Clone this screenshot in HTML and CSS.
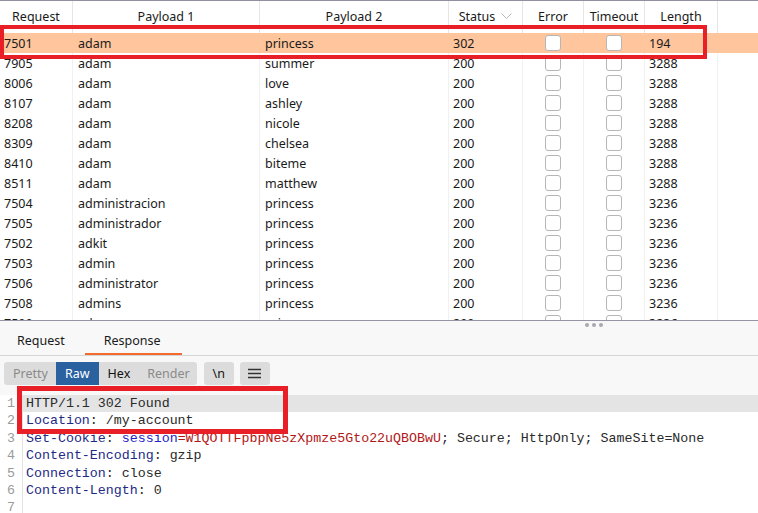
FILE: index.html
```html
<!DOCTYPE html>
<html>
<head>
<meta charset="utf-8">
<link rel="stylesheet" href="styles.css">
</head>
<body>
<div class="app">
  <div class="results">
    <div class="row head">
      <div class="c">Request</div>
      <div class="c">Payload 1</div>
      <div class="c">Payload 2</div>
      <div class="c">Status <svg class="chev" width="11" height="7" viewBox="0 0 11 7"><path d="M0.5 0.5 L5.5 5.5 L10.5 0.5" fill="none" stroke="#b8b8c0" stroke-width="1"/></svg></div>
      <div class="c">Error</div>
      <div class="c">Timeout</div>
      <div class="c">Length</div>
      <div class="c"></div>
    </div>
    <div class="row sel"><div class="c">7501</div><div class="c">adam</div><div class="c">princess</div><div class="c">302</div><div class="c cb"><span class="box"></span></div><div class="c cb"><span class="box"></span></div><div class="c">194</div><div class="c"></div></div>
    <div class="row"><div class="c">7905</div><div class="c">adam</div><div class="c">summer</div><div class="c">200</div><div class="c cb"><span class="box"></span></div><div class="c cb"><span class="box"></span></div><div class="c">3288</div><div class="c"></div></div>
    <div class="row"><div class="c">8006</div><div class="c">adam</div><div class="c">love</div><div class="c">200</div><div class="c cb"><span class="box"></span></div><div class="c cb"><span class="box"></span></div><div class="c">3288</div><div class="c"></div></div>
    <div class="row"><div class="c">8107</div><div class="c">adam</div><div class="c">ashley</div><div class="c">200</div><div class="c cb"><span class="box"></span></div><div class="c cb"><span class="box"></span></div><div class="c">3288</div><div class="c"></div></div>
    <div class="row"><div class="c">8208</div><div class="c">adam</div><div class="c">nicole</div><div class="c">200</div><div class="c cb"><span class="box"></span></div><div class="c cb"><span class="box"></span></div><div class="c">3288</div><div class="c"></div></div>
    <div class="row"><div class="c">8309</div><div class="c">adam</div><div class="c">chelsea</div><div class="c">200</div><div class="c cb"><span class="box"></span></div><div class="c cb"><span class="box"></span></div><div class="c">3288</div><div class="c"></div></div>
    <div class="row"><div class="c">8410</div><div class="c">adam</div><div class="c">biteme</div><div class="c">200</div><div class="c cb"><span class="box"></span></div><div class="c cb"><span class="box"></span></div><div class="c">3288</div><div class="c"></div></div>
    <div class="row"><div class="c">8511</div><div class="c">adam</div><div class="c">matthew</div><div class="c">200</div><div class="c cb"><span class="box"></span></div><div class="c cb"><span class="box"></span></div><div class="c">3288</div><div class="c"></div></div>
    <div class="row"><div class="c">7504</div><div class="c">administracion</div><div class="c">princess</div><div class="c">200</div><div class="c cb"><span class="box"></span></div><div class="c cb"><span class="box"></span></div><div class="c">3236</div><div class="c"></div></div>
    <div class="row"><div class="c">7505</div><div class="c">administrador</div><div class="c">princess</div><div class="c">200</div><div class="c cb"><span class="box"></span></div><div class="c cb"><span class="box"></span></div><div class="c">3236</div><div class="c"></div></div>
    <div class="row"><div class="c">7502</div><div class="c">adkit</div><div class="c">princess</div><div class="c">200</div><div class="c cb"><span class="box"></span></div><div class="c cb"><span class="box"></span></div><div class="c">3236</div><div class="c"></div></div>
    <div class="row"><div class="c">7503</div><div class="c">admin</div><div class="c">princess</div><div class="c">200</div><div class="c cb"><span class="box"></span></div><div class="c cb"><span class="box"></span></div><div class="c">3236</div><div class="c"></div></div>
    <div class="row"><div class="c">7506</div><div class="c">administrator</div><div class="c">princess</div><div class="c">200</div><div class="c cb"><span class="box"></span></div><div class="c cb"><span class="box"></span></div><div class="c">3236</div><div class="c"></div></div>
    <div class="row"><div class="c">7508</div><div class="c">admins</div><div class="c">princess</div><div class="c">200</div><div class="c cb"><span class="box"></span></div><div class="c cb"><span class="box"></span></div><div class="c">3236</div><div class="c"></div></div>
    <div class="row"><div class="c">7509</div><div class="c">adm</div><div class="c">princess</div><div class="c">200</div><div class="c cb"><span class="box"></span></div><div class="c cb"><span class="box"></span></div><div class="c">3236</div><div class="c"></div></div>
    <div class="mark mark1"></div>
  </div>
  <div class="tabs">
    <span class="grip"><i></i><i></i><i></i></span>
    <div class="tab">Request</div>
    <div class="tab active">Response</div>
  </div>
  <div class="toolbar">
    <div class="group">
      <span class="opt dim">Pretty</span>
      <span class="opt on">Raw</span>
      <span class="opt">Hex</span>
      <span class="opt dim">Render</span>
    </div>
    <div class="btn">\n</div>
    <div class="btn"><svg width="13" height="11" viewBox="0 0 13 11"><path d="M0 1.5H13M0 5.5H13M0 9.5H13" stroke="#333" stroke-width="1.3"/></svg></div>
  </div>
  <div class="editor">
    <div class="ln cur"><span class="no">1</span><span class="code">HTTP/1.1 302 Found</span></div>
    <div class="ln"><span class="no">2</span><span class="code"><span class="k">Location</span>: /my-account</span></div>
    <div class="ln"><span class="no">3</span><span class="code"><span class="k">Set-Cookie</span>: <span class="n">session</span><span class="v">=W1QOTTFpbpNe5zXpmze5Gto22uQBOBwU</span>; Secure; HttpOnly; SameSite=None</span></div>
    <div class="ln"><span class="no">4</span><span class="code"><span class="k">Content-Encoding</span>: gzip</span></div>
    <div class="ln"><span class="no">5</span><span class="code"><span class="k">Connection</span>: close</span></div>
    <div class="ln"><span class="no">6</span><span class="code"><span class="k">Content-Length</span>: 0</span></div>
    <div class="ln"><span class="no">7</span><span class="code"></span></div>
    <div class="mark mark2"></div>
  </div>
</div>
</body>
</html>
```
FILE: styles.css
```css
* { box-sizing: border-box; }
html, body { margin: 0; padding: 0; }
body {
  width: 758px;
  height: 513px;
  overflow: hidden;
  background: #ffffff;
  font-family: "Noto Sans", "Open Sans", sans-serif;
  font-size: 12.5px;
  color: #1a1a1a;
}
.app { display: flex; flex-direction: column; height: 513px; }

.results {
  position: relative;
  height: 321px;
  flex: none;
  overflow: hidden;
  border-top: 1px solid #8f8f9f;
  border-bottom: 1px solid #9595a5;
}
.row {
  display: grid;
  grid-template-columns: 73px 187px 189px 74px 61px 61px 73px 1fr;
  height: 20px;
  align-items: stretch;
}
.row .c {
  border-right: 1px solid #f1f1f1;
  padding-left: 4px;
  padding-top: 1px;
  display: flex;
  align-items: center;
  white-space: nowrap;
  overflow: hidden;
}
.row .c:nth-child(2), .row .c:nth-child(3) { padding-left: 5px; }
.row .c:last-child { border-right: none; }
.row.head { height: 32px; }
.row.head .c {
  justify-content: center;
  padding-left: 0;
  padding-top: 0;
  padding-bottom: 1px;
  border-right: 1px solid #e6e6e6;
}
.row.head .c:last-child { border-right: none; }
.chev { margin-left: 6px; }
.row.sel { background: #ffc59c; }
.row.sel .c { border-right-color: transparent; }
.row .cb { justify-content: center; padding-left: 0; padding-top: 0; }
.box {
  width: 16px;
  height: 16px;
  border: 1.5px solid #b6b6b6;
  border-radius: 3px;
  background: #ffffff;
}

.mark {
  position: absolute;
  border: 4px solid #e81f27;
  pointer-events: none;
}
.mark1 { left: 0; top: 24px; width: 707px; height: 34px; }
.mark2 { left: 17px; top: -9px; width: 271px; height: 48px; border-width: 5px; }

.tabs {
  position: relative;
  height: 35px;
  flex: none;
  background: #f8f8f8;
  border-bottom: 1px solid #d6d6d6;
  display: flex;
  align-items: stretch;
}
.grip {
  position: absolute;
  left: 585px;
  top: 2px;
  display: flex;
  gap: 3px;
}
.grip i {
  width: 4px; height: 4px;
  border-radius: 50%;
  background: #a8a8b0;
}
.tab {
  display: flex;
  align-items: center;
  padding: 7px 20px 0 17px;
  font-size: 12.5px;
  color: #1a1a1a;
  border-bottom: 2px solid transparent;
}
.tab.active {
  padding: 7px 21px 0 19px;
  border-bottom-color: #f36a2d;
}

.toolbar {
  flex: none;
  height: 39px;
  background: #f8f8f8;
  display: flex;
  align-items: flex-start;
  padding: 6px 0 0 4px;
}
.group {
  display: flex;
  height: 23px;
  background: #dcdcdc;
  border-radius: 3px;
  overflow: hidden;
}
.opt {
  display: flex;
  align-items: center;
  padding: 0 8px 0 9px;
  font-size: 12.5px;
  color: #111;
}
.opt.dim { color: #8a8a8a; }
.opt.on { background: #2a619f; color: #ffffff; padding: 0 9px; }
.opt:last-child { padding-right: 7px; }
.btn {
  margin-left: 7px;
  width: 30px;
  height: 23px;
  border-radius: 3px;
  background: #dcdcdc;
  display: flex;
  align-items: center;
  justify-content: center;
  font-size: 12.5px;
  color: #111;
}
.btn + .btn { margin-left: 6px; }

.editor {
  position: relative;
  flex: 1;
  background: #ffffff;
  font-family: "Liberation Mono", "Courier New", monospace;
  font-size: 13.3px;
  color: #2a2a2a;
}
.ln {
  display: flex;
  height: 17.4px;
  line-height: 17.4px;
  white-space: pre;
}
.no {
  width: 23px;
  flex: none;
  text-align: right;
  padding-right: 7px;
  color: #9a9a9a;
  border-right: 1px solid #e2e2e2;
}
.code { flex: 1; padding-left: 3px; }
.ln.cur .code { background: #e4e4e4; }
.k { color: #1d2b84; }
.n { color: #2424c8; }
.v { color: #b01818; }
```
